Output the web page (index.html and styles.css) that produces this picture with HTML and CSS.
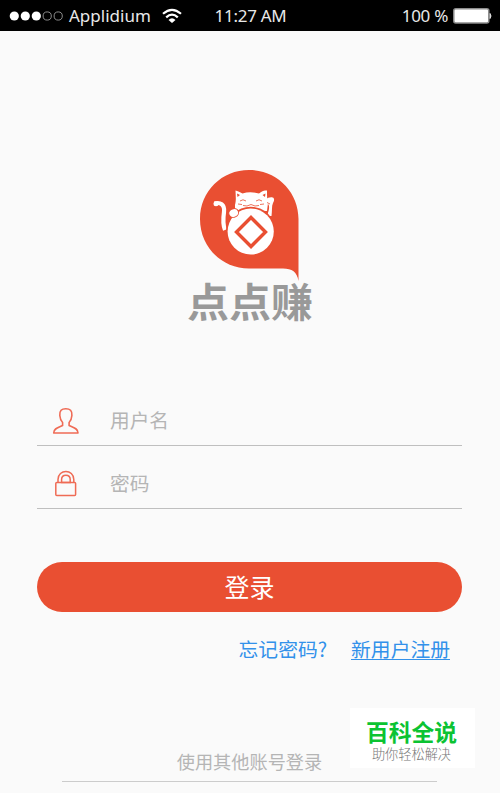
FILE: index.html
```html
<!DOCTYPE html>
<html lang="zh-CN">
<head>
<meta charset="utf-8">
<title>点点赚</title>
<link rel="stylesheet" href="styles.css">
</head>
<body>
<header class="status">
  <div class="status-left">
    <svg class="signal" width="54" height="12" viewBox="0 0 54 12">
      <g fill="#fff"><circle cx="5.3" cy="6" r="4.6"/><circle cx="16.3" cy="6" r="4.6"/><circle cx="27.3" cy="6" r="4.6"/></g>
      <g fill="none" stroke="#8c8c8c"><circle cx="38.2" cy="6" r="4.1"/><circle cx="49.2" cy="6" r="4.1"/></g>
    </svg>
    <span class="carrier">Applidium</span>
    <svg class="wifi" width="20" height="16" viewBox="0 0 20 16">
      <g fill="none" stroke="#fff" stroke-width="2.2"><path d="M1 5.8Q10 -2.2 19 5.8"/><path d="M4.2 9.4Q10 3.800 15.8 9.400"/></g>
      <path d="M6.500 12Q10 8.500 13.500 12L10 15Z" fill="#fff"/>
    </svg>
  </div>
  <span class="clock">11:27 AM</span>
  <div class="status-right">
    <span class="percent">100 %</span>
    <svg class="battery" width="39" height="16" viewBox="0 0 39 16">
      <rect x=".8" y=".8" width="35" height="14.2" rx="2" fill="#fff" stroke="#8c8c8c" stroke-width="1.5"/>
      <path d="M37 5.5Q39 8 37 10.5Z" fill="#ddd" stroke="#ddd"/>
    </svg>
  </div>
</header>
<main class="login">
  <div class="brand">
    <svg class="pin" width="99" height="112" viewBox="0 0 99 112">
      <path d="M49 0C77 0 98.500 22 98.500 49V111C97 102 92 98.600 83 98.600H49C22 98.600 0 77 0 49S22 0 49 0Z" fill="#e94f32"/>
      <path d="M14.500 33.500C20 32 25 34 24 42C23 49 22.500 54 25 60" fill="none" stroke="#fff" stroke-width="4.200"/>
      <circle cx="16" cy="33.700" r="2.500" fill="#fff"/>
      <path d="M35.500 20.500C39 21.500 40.500 22.500 42.500 23.500Q50 21 59 23.500C62 21 64 20.500 67 20.500C67 26 67 29 68 33L67 41H35V35C36.500 29 35.500 25 35.500 20.500Z" fill="#fff"/>
      <path d="M67 46C69.500 39 69.500 37 68.500 34.500C65 32 66 27 70 27.500C74.500 26 75 30 73 33C71.500 36 72.300 41 71.500 46Z" fill="#fff"/>
      <path d="M37 23.500L40 25L37.500 27ZM65.500 23.500L62.500 25L65 27Z" fill="#e94f32"/>
      <path d="M40 31Q43 28.500 46 31M56 31Q59 28.500 62 31M43 35.500Q47 37 51 34.500Q55 37 59 35.500M38 34L42 34.500M60 34.500L64 34M67 32.500L70 34" fill="none" stroke="#e94f32" stroke-width=".8"/>
      <circle cx="50.700" cy="61.500" r="24.800" fill="#e94f32"/>
      <circle cx="50.700" cy="61.500" r="23.100" fill="#fff"/>
      <ellipse cx="33.700" cy="43" rx="5" ry="4.200" fill="#fff" stroke="#e94f32" stroke-width="1" transform="rotate(-24 33.700 43)"/>
      <path d="M51 47.500L65.500 62L51 76.500L36.500 62Z" fill="#fff" stroke="#e94f32" stroke-width="3.400"/>
    </svg>
    <h1 class="brand-name">点点赚</h1>
  </div>
  <form class="form">
    <div class="field">
      <svg class="field-icon" width="28" height="30" viewBox="0 0 28 30">
        <path d="M10.600 19.500V16.500C8.600 14.500 8 12 7.800 9.500C7.500 4.500 9.500 2.800 13.800 2.800S20.200 4.500 19.900 9.500C19.700 12 19.100 14.500 17.100 16.500V19.500C21 21.500 26 22 26 27H1.700C1.700 22 6.700 21.500 10.600 19.500Z" fill="none" stroke="#ef6b55" stroke-width="1.600" stroke-linejoin="round"/>
      </svg>
      <span class="hint">用户名</span>
    </div>
    <div class="field">
      <svg class="field-icon" width="28" height="30" viewBox="0 0 28 30">
        <g fill="none" stroke="#ef6b55" stroke-width="1.500"><rect x="3.800" y="13.600" width="19.800" height="13" rx="1"/><path d="M6 13.500V10.500C6 -.2 21.800 -.2 21.800 10.500V13.500"/><path d="M9.600 13.500V10.500C9.600 4.800 18.200 4.800 18.200 10.500V13.500Z"/></g>
      </svg>
      <span class="hint">密码</span>
    </div>
    <div class="submit">登录</div>
    <div class="links"><a class="forgot">忘记密码?</a><a class="register">新用户注册</a></div>
  </form>
  <footer class="other">使用其他账号登录</footer>
</main>
<aside class="badge"><strong class="badge-title">百科全说</strong><span class="badge-sub">助你轻松解决</span></aside>
</body>
</html>
```
FILE: styles.css
```css
* { box-sizing: border-box; }
body {
  margin: 0;
  width: 500px;
  height: 793px;
  overflow: hidden;
  position: relative;
  background: #fafafa;
  font-family: "Noto Sans", "Noto Sans CJK SC", sans-serif;
}
svg { display: block; flex: none; }
.status {
  display: grid;
  grid-template-columns: 1fr auto 1fr;
  align-items: center;
  height: 31px;
  padding: 1px 8px 0 9px;
  background: #000;
  color: #e8e8e8;
  font-size: 17px;
  line-height: 30px;
  white-space: nowrap;
}
.status-left, .status-right { display: flex; align-items: center; }
.status-right { justify-content: flex-end; gap: 5px; }
.carrier { margin-left: 6px; width: 83px; }
.wifi { margin-left: 10px; }
.clock { letter-spacing: -.3px; }
.percent { letter-spacing: -.3px; }
.login { font-family: "Noto Sans CJK SC", sans-serif; padding: 139px 38px 0 37px; }
.brand { display: flex; flex-direction: column; align-items: center; height: 213px; }
.brand-name {
  margin: -3px 0 0;
  padding-left: 1px;
  font-size: 42px;
  line-height: 42px;
  font-weight: 700;
  color: #999;
  transform: scaleY(.95);
}
.field {
  display: flex;
  align-items: center;
  height: 63px;
  padding: 13px 0 0 15px;
  border-bottom: 1px solid #bfbfbf;
}
.hint {
  margin: -1px 0 0 30px;
  font-size: 19.700px;
  line-height: 28px;
  font-weight: 400;
  color: #b5b5b5;
}
.submit {
  height: 50px;
  margin-top: 53px;
  border-radius: 25px;
  background: #e94f32;
  color: #fff;
  font-size: 25px;
  line-height: 49px;
  text-align: center;
}
.links {
  display: flex;
  justify-content: flex-end;
  gap: 24px;
  margin-top: 24px;
  padding-right: 12px;
  font-size: 19.800px;
  line-height: 25px;
  color: #3291ea;
}
.register { border-bottom: 1px solid #3291ea; height: 24px; }
.other {
  margin: 87px 25px 0;
  height: 34px;
  border-bottom: 1px solid #ccc;
  color: #b5b5b5;
  font-size: 18.200px;
  line-height: 27px;
  font-weight: 400;
  text-align: center;
}
.badge {
  position: absolute;
  left: 350px;
  top: 708px;
  width: 125px;
  height: 60px;
  background: #fff;
  display: flex;
  flex-direction: column;
  align-items: center;
  font-family: "Noto Sans CJK SC", sans-serif;
  padding: 10px 2px 0 0;
}
.badge-title { font-size: 22.800px; line-height: 27px; color: #0bc332; }
.badge-sub { font-size: 13.200px; line-height: 18px; color: #777; font-weight: 300; }
```
